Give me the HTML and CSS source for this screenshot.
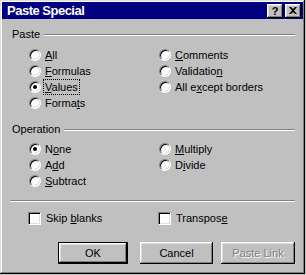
FILE: index.html
```html
<!DOCTYPE html>
<html lang="en">
<head>
    <meta charset="UTF-8">
    <title>Paste Special</title>
    <link rel="stylesheet" href="styles.css">
</head>
<body>
    <div class="dialog">
        <div class="titlebar">
            <span class="title">Paste Special</span>
            <div class="title-buttons">
                <span class="tbtn">?</span>
                <span class="tbtn">
                    <svg width="8" height="7" viewBox="0 0 8 7"><path d="M0 0h2l2 2 2-2h2L5 3.5 8 7H6L4 5 2 7H0l3-3.5z" fill="#000"/></svg>
                </span>
            </div>
        </div>

        <div class="body">
            <div class="group-title"><span>Paste</span><span class="rule"></span></div>
            <div class="options rows-4">
                <div class="opt"><span class="radio"></span><span><u>A</u>ll</span></div>
                <div class="opt"><span class="radio"></span><span><u>F</u>ormulas</span></div>
                <div class="opt"><span class="radio checked"></span><span class="focus"><u>V</u>alues</span></div>
                <div class="opt"><span class="radio"></span><span>Forma<u>t</u>s</span></div>
                <div class="opt"><span class="radio"></span><span><u>C</u>omments</span></div>
                <div class="opt"><span class="radio"></span><span>Validatio<u>n</u></span></div>
                <div class="opt"><span class="radio"></span><span>All e<u>x</u>cept borders</span></div>
            </div>

            <div class="group-title operation"><span>Operation</span><span class="rule"></span></div>
            <div class="options rows-3">
                <div class="opt"><span class="radio checked"></span><span>N<u>o</u>ne</span></div>
                <div class="opt"><span class="radio"></span><span>A<u>d</u>d</span></div>
                <div class="opt"><span class="radio"></span><span><u>S</u>ubtract</span></div>
                <div class="opt"><span class="radio"></span><span><u>M</u>ultiply</span></div>
                <div class="opt"><span class="radio"></span><span>D<u>i</u>vide</span></div>
            </div>

            <div class="rule separator"></div>

            <div class="options rows-1">
                <div class="opt"><span class="check"></span><span>Skip <u>b</u>lanks</span></div>
                <div class="opt"><span class="check"></span><span>Transpos<u>e</u></span></div>
            </div>

            <div class="buttons">
                <button class="btn default ok">OK</button>
                <button class="btn cancel">Cancel</button>
                <button class="btn link" disabled>Paste Link</button>
            </div>
        </div>
    </div>
</body>
</html>
```

FILE: styles.css
```css
body {
    margin: 0;
    background: #c0c0c0;
    font-family: "Liberation Sans", Arial, sans-serif;
    font-size: 11px;
    color: #000;
}
.dialog {
    width: 305px;
    height: 274px;
    box-sizing: border-box;
    padding: 2px;
    background: #c0c0c0;
    box-shadow: inset -1px -1px #000, inset 1px 1px #dfdfdf, inset -2px -2px #808080, inset 2px 2px #fff;
}
.titlebar {
    height: 17px;
    background: #000080;
    display: flex;
    align-items: center;
    justify-content: space-between;
}
.title {
    color: #fff;
    font-weight: bold;
    font-size: 13px;
    letter-spacing: -0.5px;
    padding-left: 5px;
    line-height: 17px;
}
.title-buttons {
    display: flex;
    gap: 2px;
    margin-right: 2px;
}
.tbtn {
    width: 16px;
    height: 14px;
    box-sizing: border-box;
    background: #c0c0c0;
    box-shadow: inset -1px -1px #000, inset 1px 1px #fff, inset -2px -2px #808080, inset 2px 2px #dfdfdf;
    display: flex;
    align-items: center;
    justify-content: center;
    font-weight: bold;
    font-size: 11px;
    line-height: 14px;
}
.body {
    padding: 9px 8px 0 8px;
}
.group-title {
    display: flex;
    align-items: center;
    gap: 4px;
    height: 13px;
    line-height: 13px;
    padding-left: 2px;
}
.group-title .rule {
    flex: 1;
}
.rule {
    height: 0;
    border-top: 1px solid #808080;
    border-bottom: 1px solid #fff;
}
.operation {
    margin-top: 12px;
}
.options {
    display: grid;
    grid-template-columns: 130px auto;
    grid-auto-flow: column;
    padding-left: 19px;
}
.rows-4 {
    grid-template-rows: repeat(4, 16px);
    margin-top: 6px;
}
.rows-3 {
    grid-template-rows: repeat(3, 16px);
    margin-top: 5px;
}
.rows-1 {
    grid-template-rows: 16px;
    margin-top: 8px;
    padding-left: 18px;
}
.opt {
    display: flex;
    align-items: center;
    gap: 4px;
    line-height: 16px;
    white-space: nowrap;
}
.radio {
    position: relative;
    width: 12px;
    height: 12px;
    box-sizing: border-box;
    border-radius: 50%;
    background: #fff;
    border: 1px solid;
    border-color: #808080 #fff #fff #808080;
    box-shadow: inset 1px 1px #000, inset -1px -1px #dfdfdf;
}
.radio.checked::after {
    content: "";
    position: absolute;
    left: 3px;
    top: 3px;
    width: 4px;
    height: 4px;
    border-radius: 50%;
    background: #000;
}
.check {
    width: 13px;
    height: 13px;
    box-sizing: border-box;
    background: #fff;
    border: 1px solid;
    border-color: #808080 #fff #fff #808080;
    box-shadow: inset 1px 1px #000, inset -1px -1px #dfdfdf;
    margin-right: 1px;
}
u {
    text-decoration: underline;
    text-underline-offset: 1px;
}
.focus {
    padding: 0 1px;
    margin-left: -1px;
    line-height: 14px;
    outline: 1px dotted #000;
}
.separator {
    margin-top: 11px;
}
.buttons {
    display: flex;
    justify-content: flex-end;
    margin-top: 16px;
}
.btn {
    height: 22px;
    padding: 0;
    border: none;
    background: #c0c0c0;
    font-family: "Liberation Sans", Arial, sans-serif;
    font-size: 11px;
    color: #000;
    box-shadow: inset -1px -1px #000, inset 1px 1px #fff, inset -2px -2px #808080, inset 2px 2px #dfdfdf;
}
.btn.default {
    border: 1px solid #000;
}
.ok {
    width: 70px;
}
.cancel {
    width: 73px;
    margin-left: 12px;
}
.link {
    width: 74px;
    margin-left: 8px;
    color: #808080;
    text-shadow: 1px 1px #fff;
}
```
